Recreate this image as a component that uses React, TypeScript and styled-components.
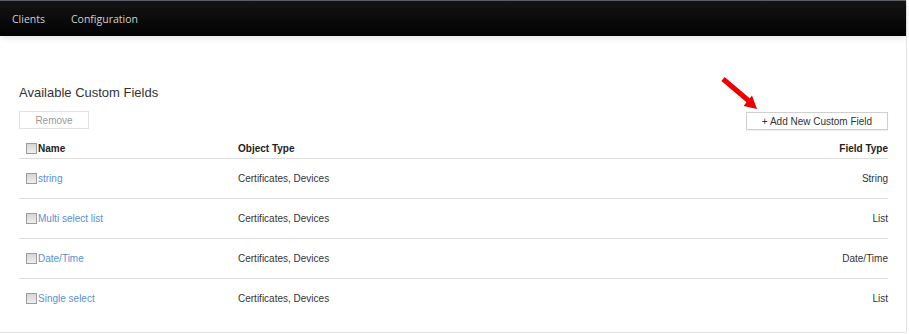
import styled, { createGlobalStyle } from "styled-components";

const GlobalStyle = createGlobalStyle`
  body {
    margin: 0;
    background: #fff;
    font-family: "Liberation Sans", Arial, sans-serif;
  }
`;

const Page = styled.div`
  width: 906px;
  height: 332px;
  border-right: 1px solid #e6e6e6;
  border-bottom: 1px solid #e3e3e3;
`;

const NavBar = styled.nav`
  display: flex;
  align-items: center;
  gap: 26px;
  height: 35px;
  padding: 0 12px;
  border-top: 1px solid #5a5f66;
  background: linear-gradient(#141414, #020202);
  box-shadow: 0 2px 6px rgba(0, 0, 0, 0.12);
`;

const NavLink = styled.a`
  font-family: "Open Sans", "Liberation Sans", sans-serif;
  font-size: 10.5px;
  color: #d0d0d0;
  text-decoration: none;
  cursor: pointer;
`;

const Content = styled.main`
  padding: 49px 18px 0 19px;
`;

const Title = styled.h2`
  margin: 0;
  font-size: 13px;
  line-height: 16px;
  font-weight: normal;
  color: #333;
`;

const Toolbar = styled.div`
  display: flex;
  justify-content: space-between;
  align-items: flex-start;
  margin-top: 10px;
`;

const Button = styled.button<{ $muted?: boolean; $w: number }>`
  box-sizing: border-box;
  width: ${(p) => p.$w}px;
  height: 18px;
  padding: 0;
  white-space: nowrap;
  border: 1px solid ${(p) => (p.$muted ? "#e2e2e2" : "#cfcfcf")};
  background: #fff;
  color: ${(p) => (p.$muted ? "#9a9a9a" : "#333")};
  font-family: "Liberation Sans", Arial, sans-serif;
  font-size: 10px;
  box-shadow: ${(p) => (p.$muted ? "none" : "0 1px 1px rgba(0,0,0,0.06)")};
  cursor: pointer;
`;

const AddWrap = styled.div`
  position: relative;
  display: flex;
  margin-top: 1px;
`;

const Arrow = styled.svg`
  position: absolute;
  left: -26px;
  top: -36px;
`;

const Grid = styled.div`
  display: grid;
  grid-template-columns: 219px 1fr auto;
  margin-top: 8px;
`;

const Cell = styled.div<{ $head?: boolean; $last?: boolean; $right?: boolean }>`
  display: flex;
  align-items: center;
  justify-content: ${(p) => (p.$right ? "flex-end" : "flex-start")};
  height: ${(p) => (p.$head ? "20px" : "39px")};
  border-bottom: ${(p) => (p.$last ? "none" : "1px solid #dcdcdc")};
  font-size: 10px;
  font-weight: ${(p) => (p.$head ? "bold" : "normal")};
  color: ${(p) => (p.$head ? "#222" : "#333")};
  white-space: nowrap;
`;

const NameCell = styled(Cell)`
  padding-left: 7px;
`;

const Check = styled.input`
  appearance: none;
  width: 11px;
  height: 11px;
  margin: 0 1px 0 0;
  border: 1px solid #9c9c9c;
  background: linear-gradient(#d6d6d6, #efefef);
`;

const FieldLink = styled.a`
  color: #5a8fd4;
  text-decoration: none;
  cursor: pointer;
`;

const fields = [
  { name: "string", objects: "Certificates, Devices", type: "String" },
  { name: "Multi select list", objects: "Certificates, Devices", type: "List" },
  { name: "Date/Time", objects: "Certificates, Devices", type: "Date/Time" },
  { name: "Single select", objects: "Certificates, Devices", type: "List" },
];

export default function App() {
  return (
    <Page>
      <GlobalStyle />
      <NavBar>
        <NavLink>Clients</NavLink>
        <NavLink>Configuration</NavLink>
      </NavBar>
      <Content>
        <Title>Available Custom Fields</Title>
        <Toolbar>
          <Button $muted $w={70}>Remove</Button>
          <AddWrap>
            <Arrow width="40" height="36" viewBox="0 0 40 36">
              <line x1="3" y1="3" x2="29" y2="25" stroke="#ee0000" strokeWidth="5" />
              <polygon points="37,33 23.5,30 32,19.5" fill="#ee0000" />
            </Arrow>
            <Button $w={142}>+ Add New Custom Field</Button>
          </AddWrap>
        </Toolbar>
        <Grid>
          <NameCell $head>
            <Check type="checkbox" />
            Name
          </NameCell>
          <Cell $head>Object Type</Cell>
          <Cell $head $right>Field Type</Cell>
          {fields.map((f, i) => {
            const last = i === fields.length - 1;
            return [
              <NameCell key={f.name + "n"} $last={last}>
                <Check type="checkbox" />
                <FieldLink>{f.name}</FieldLink>
              </NameCell>,
              <Cell key={f.name + "o"} $last={last}>{f.objects}</Cell>,
              <Cell key={f.name + "t"} $last={last} $right>{f.type}</Cell>,
            ];
          })}
        </Grid>
      </Content>
    </Page>
  );
}
